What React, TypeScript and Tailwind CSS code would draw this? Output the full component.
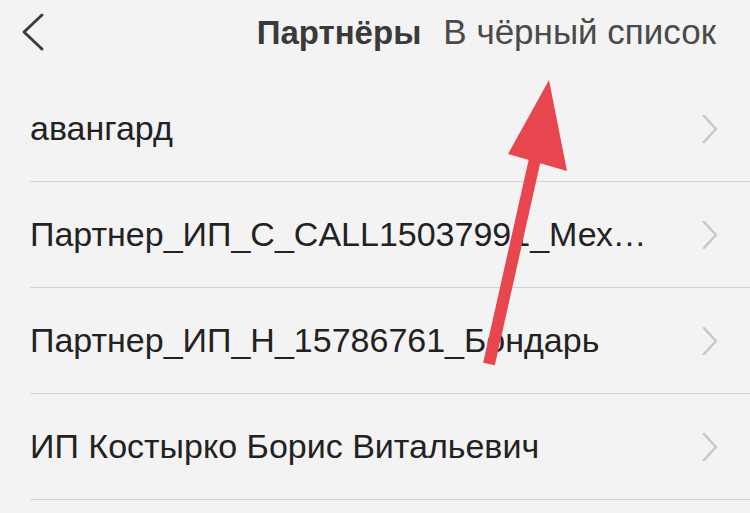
const rows = [
  'авангард',
  'Партнер_ИП_С_CALL15037991_Механиков',
  'Партнер_ИП_Н_15786761_Бондарь',
  'ИП Костырко Борис Витальевич',
];

function Chevron() {
  return (
    <svg width="16" height="30" viewBox="0 0 16 30" fill="none" className="shrink-0">
      <path d="M2 2l12 13L2 28" stroke="#c7c7cc" strokeWidth="2.5" strokeLinecap="round" strokeLinejoin="round" />
    </svg>
  );
}

export default function App() {
  return (
    <div className="relative w-[750px] h-[513px] overflow-hidden bg-[#f3f3f3] font-['Liberation_Sans',Arial,sans-serif]">
      {/* header */}
      <div className="flex items-center h-[64px] pl-[20px] pr-[34px]">
        <svg width="26" height="40" viewBox="0 0 26 40" fill="none">
          <path d="M22 3L4 20l18 17" stroke="#3c3c3c" strokeWidth="3" strokeLinecap="round" strokeLinejoin="round" />
        </svg>
        <div className="ml-auto flex items-baseline gap-[22px] text-[35px] text-[#3a3a3a]">
          <span className="font-bold text-[33px]">Партнёры</span>
          <span className="text-[#4a4a4a]">В чёрный список</span>
        </div>
      </div>

      {/* list */}
      <div className="ml-[30px] mt-[12px]">
        {rows.map((name, i) => (
          <div key={i} className="flex items-center h-[106px] pr-[32px] border-b border-[#d4d4d8]">
            <span className="flex-1 min-w-0 truncate pr-[54px] text-[34px] text-[#222222]">{name}</span>
            <Chevron />
          </div>
        ))}
      </div>

      {/* annotation arrow */}
      <svg className="absolute left-0 top-0 pointer-events-none" width="750" height="513" viewBox="0 0 750 513">
        <line x1="489" y1="364" x2="537" y2="150" stroke="#e8464e" strokeWidth="12" />
        <polygon points="549,80 508,154 567,171" fill="#e8464e" />
      </svg>
    </div>
  );
}
